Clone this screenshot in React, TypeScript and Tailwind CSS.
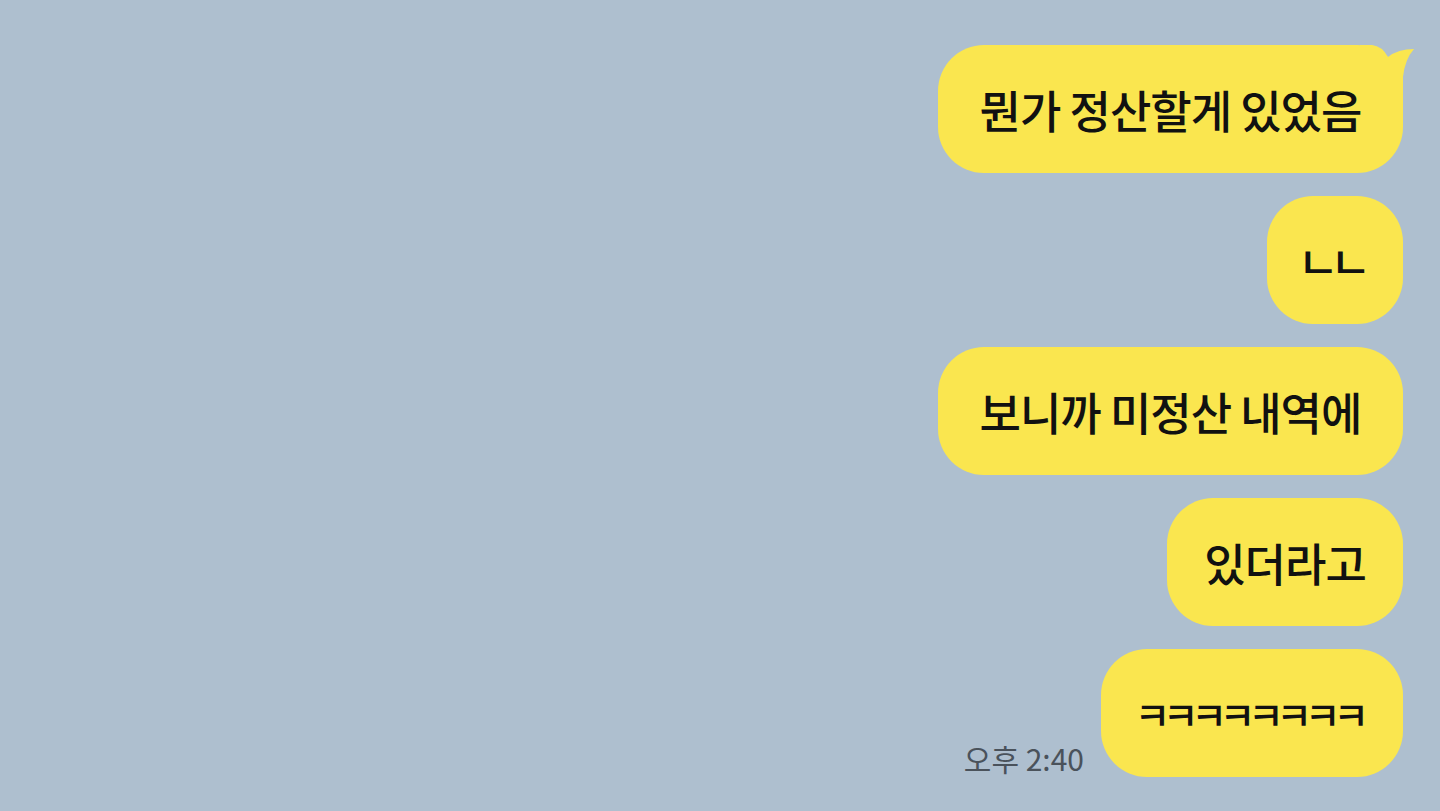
const messages = [
  { text: '뭔가 정산할게 있었음', w: 'w-[465px]', track: 'text-[45px] tracking-[-1px]' },
  { text: 'ㄴㄴ', w: 'w-[136px]', track: 'text-[45px] tracking-[-9px] -translate-x-[5px]' },
  { text: '보니까 미정산 내역에', w: 'w-[465px]', track: 'text-[45px] tracking-[-1px]' },
  { text: '있더라고', w: 'w-[236px]', track: 'text-[45px] tracking-[-1px]' },
  { text: 'ㅋㅋㅋㅋㅋㅋㅋㅋ', w: 'w-[302px]', track: 'text-[39px] tracking-[-7.5px] -translate-x-[4px]' },
];

function Bubble({ text, w, track, tail }: { text: string; w: string; track: string; tail?: boolean }) {
  return (
    <div className={`relative ${w}`}>
      <div className="h-[128px] flex items-center justify-center rounded-[46px] bg-[#fae64f] text-[#111111] leading-none">
        <span className={`font-medium ${track}`}>{text}</span>
      </div>
      {tail && (
        <svg className="absolute -right-[13px] top-0" width="56" height="50" viewBox="0 0 56 50">
          <path d="M0 0 L12 0 Q22 1 28 12 Q38 4 54 4 Q45 14 43 32 L43 50 L0 50 Z" fill="#fae64f" />
        </svg>
      )}
    </div>
  );
}

export default function App() {
  return (
    <div
      className="w-[1440px] h-[811px] bg-[#aebfcf] overflow-hidden"
      style={{ fontFamily: '"Noto Sans CJK KR", "Noto Sans", sans-serif' }}
    >
      <div className="flex flex-col items-end gap-[23px] pt-[45px] pr-[37px]">
        {messages.map((m, i) => {
          const last = i === messages.length - 1;
          return (
            <div key={i} className="flex items-end gap-[17px]">
              {last && (
                <span className="text-[30px] leading-none text-[#4a525b] mb-[4px]">오후 2:40</span>
              )}
              <Bubble text={m.text} w={m.w} track={m.track} tail={i === 0} />
            </div>
          );
        })}
      </div>
    </div>
  );
}
